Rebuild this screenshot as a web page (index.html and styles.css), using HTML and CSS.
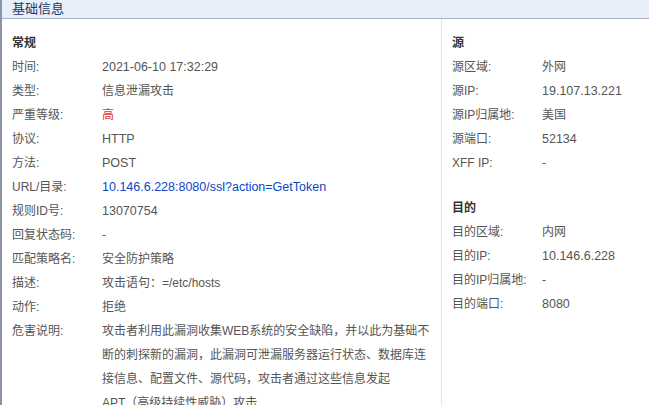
FILE: index.html
```html
<!DOCTYPE html>
<html lang="zh-CN">
<head>
<meta charset="utf-8">
<title>基础信息</title>
<link rel="stylesheet" href="styles.css">
</head>
<body>
<div class="panel">
  <div class="panel-header">基础信息</div>
  <div class="panel-body">
    <div class="col-left">
      <div class="sec-title">常规</div>
      <div class="row"><span class="lbl">时间:</span><span class="val lat">2021-06-10 17:32:29</span></div>
      <div class="row"><span class="lbl">类型:</span><span class="val">信息泄漏攻击</span></div>
      <div class="row"><span class="lbl">严重等级:</span><span class="val red">高</span></div>
      <div class="row"><span class="lbl">协议:</span><span class="val lat">HTTP</span></div>
      <div class="row"><span class="lbl">方法:</span><span class="val lat">POST</span></div>
      <div class="row"><span class="lbl">URL/目录:</span><span class="val lat blue">10.146.6.228:8080/ssl?action=GetToken</span></div>
      <div class="row"><span class="lbl">规则ID号:</span><span class="val lat">13070754</span></div>
      <div class="row"><span class="lbl">回复状态码:</span><span class="val">-</span></div>
      <div class="row"><span class="lbl">匹配策略名:</span><span class="val">安全防护策略</span></div>
      <div class="row"><span class="lbl">描述:</span><span class="val">攻击语句：=/etc/hosts</span></div>
      <div class="row"><span class="lbl">动作:</span><span class="val">拒绝</span></div>
      <div class="row"><span class="lbl">危害说明:</span><span class="val wrap">攻击者利用此漏洞收集WEB系统的安全缺陷，并以此为基础不断的刺探新的漏洞，此漏洞可泄漏服务器运行状态、数据库连接信息、配置文件、源代码，攻击者通过这些信息发起<span class="nb">APT（高级持续性威胁）攻击</span></span></div>
    </div>
    <div class="col-right">
      <div class="sec-title">源</div>
      <div class="row"><span class="lbl">源区域:</span><span class="val">外网</span></div>
      <div class="row"><span class="lbl">源IP:</span><span class="val lat">19.107.13.221</span></div>
      <div class="row"><span class="lbl">源IP归属地:</span><span class="val">美国</span></div>
      <div class="row"><span class="lbl">源端口:</span><span class="val lat">52134</span></div>
      <div class="row"><span class="lbl">XFF IP:</span><span class="val">-</span></div>
      <div class="sec-title sec-gap">目的</div>
      <div class="row"><span class="lbl">目的区域:</span><span class="val">内网</span></div>
      <div class="row"><span class="lbl">目的IP:</span><span class="val lat">10.146.6.228</span></div>
      <div class="row"><span class="lbl">目的IP归属地:</span><span class="val">-</span></div>
      <div class="row"><span class="lbl">目的端口:</span><span class="val lat">8080</span></div>
    </div>
  </div>
</div>
</body>
</html>
```
FILE: styles.css
```css
html, body {
  margin: 0;
  padding: 0;
  height: 405px;
  overflow: hidden;
  background: #ffffff;
}
body {
  font-family: "Liberation Sans", "Noto Sans CJK SC", sans-serif;
  font-size: 12px;
  color: #555555;
}
.panel {
  border-left: 2px solid #8b94a6;
  height: 405px;
  box-sizing: border-box;
}
.panel-header {
  height: 18px;
  line-height: 17px;
  background: #e7eff9;
  border-bottom: 1px solid #a9b3c5;
  color: #1d3566;
  font-size: 13px;
  padding-left: 10px;
}
.panel-body {
  display: flex;
  align-items: stretch;
  height: 386px;
}
.col-left {
  width: 429px;
  padding-left: 10px;
  padding-top: 12px;
  border-right: 1px solid #e3e3e3;
}
.col-right {
  flex: 1;
  padding-left: 10px;
  padding-top: 12px;
}
.sec-title {
  height: 24px;
  line-height: 24px;
  font-weight: bold;
  color: #333333;
}
.sec-gap {
  margin-top: 21px;
}
.row {
  display: flex;
  line-height: 24px;
  min-height: 24px;
}
.lbl {
  width: 90px;
  flex: none;
  white-space: nowrap;
}
.val {
  white-space: nowrap;
}
.val.lat {
  font-size: 12.5px;
}
.val.wrap {
  white-space: normal;
  width: 334px;
}
.nb {
  white-space: nowrap;
}
.red {
  color: #e8332f;
}
.blue {
  color: #0b47c6;
}
```
